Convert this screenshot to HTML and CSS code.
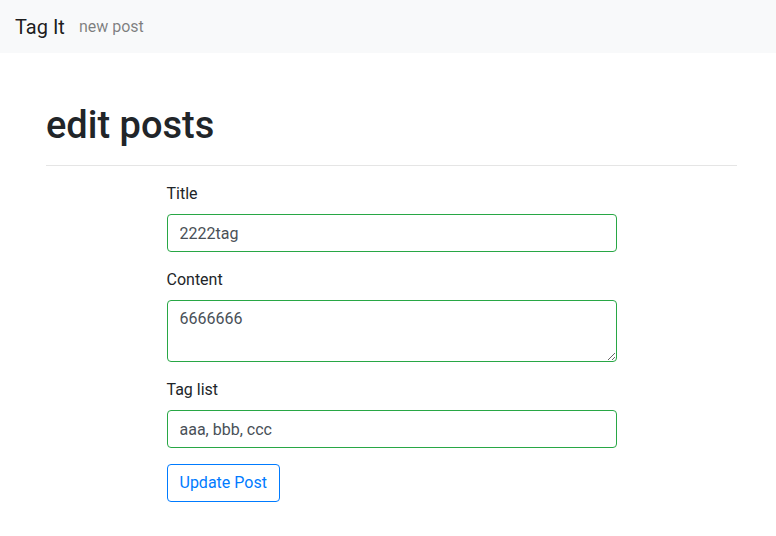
FILE: index.html
```html
<!DOCTYPE html>
<html>
<head>
<meta charset="utf-8">
<link rel="stylesheet" href="styles.css">
</head>
<body>
<nav class="navbar">
  <a class="brand" href="#">Tag It</a>
  <a class="nav-link" href="#">new post</a>
</nav>
<main class="container">
  <h1 class="title">edit posts</h1>
  <hr class="divider">
  <form class="form">
    <div class="group">
      <label class="label">Title</label>
      <input class="control" type="text" value="2222tag">
    </div>
    <div class="group">
      <label class="label">Content</label>
      <textarea class="control area" rows="2">6666666</textarea>
    </div>
    <div class="group">
      <label class="label">Tag list</label>
      <input class="control" type="text" value="aaa, bbb, ccc">
    </div>
    <button class="btn" type="button">Update Post</button>
  </form>
</main>
</body>
</html>
```
FILE: styles.css
```css
* { box-sizing: border-box; }
body {
  margin: 0;
  font-family: Roboto, "Liberation Sans", sans-serif;
  font-size: 16px;
  line-height: 1.5;
  color: #212529;
  background: #fff;
}
.navbar {
  height: 53px;
  background: #f8f9fa;
  display: flex;
  align-items: center;
  padding: 0 15px;
  gap: 14px;
}
.brand {
  font-size: 20px;
  color: rgba(0,0,0,.9);
  text-decoration: none;
}
.nav-link {
  font-size: 16px;
  color: rgba(0,0,0,.5);
  text-decoration: none;
}
.container {
  width: 691px;
  margin-left: 46px;
  padding-top: 48px;
}
.title {
  margin: 0 0 8px;
  font-size: 38px;
  font-weight: 500;
  line-height: 48px;
}
.divider {
  margin: 16px 0;
  border: 0;
  border-top: 1px solid rgba(0,0,0,.1);
}
.form {
  width: 450px;
  margin: 0 auto;
}
.group { margin-bottom: 16px; }
.label {
  display: block;
  margin-bottom: 8px;
}
.control {
  display: block;
  width: 100%;
  height: 38px;
  padding: 6px 12px;
  font: inherit;
  font-size: 16px;
  line-height: 24px;
  color: #495057;
  background: #fff;
  border: 1px solid #28a745;
  border-radius: 4px;
  margin: 0;
}
.area {
  height: 62px;
  resize: vertical;
}
.btn {
  font: inherit;
  font-size: 16px;
  line-height: 24px;
  padding: 6px 12px;
  color: #007bff;
  background: transparent;
  border: 1px solid #007bff;
  border-radius: 4px;
}
```
